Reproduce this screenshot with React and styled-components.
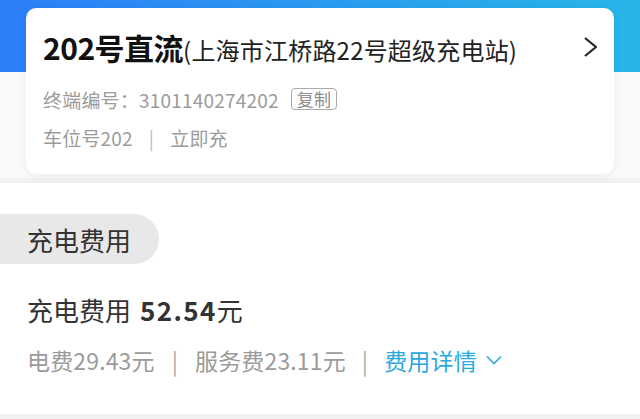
import styled, { createGlobalStyle } from "styled-components";

const GlobalStyle = createGlobalStyle`
  html, body {
    margin: 0;
    padding: 0;
    background: #ffffff;
  }
  body {
    font-family: "Noto Sans CJK SC", "Noto Sans", sans-serif;
  }
`;

const Page = styled.div`
  width: 640px;
  height: 419px;
  overflow: hidden;
  display: flex;
  flex-direction: column;
`;

const TopArea = styled.div`
  padding: 8px 26px 4px;
  background: linear-gradient(90deg, #2c7ef8 0%, #27b6e8 100%) top / 100% 72px
      no-repeat,
    #fafafa;
  border-bottom: 5px solid #f1f1f1;
`;

const Card = styled.div`
  background: #ffffff;
  border-radius: 10px;
  box-shadow: 0 2px 8px rgba(0, 0, 0, 0.06);
  padding: 24px 17px 24px;
  display: flex;
  flex-direction: column;
`;

const TitleRow = styled.div`
  display: flex;
  align-items: center;
  justify-content: space-between;
  height: 30px;
  margin-bottom: 24px;
`;

const Title = styled.div`
  display: flex;
  align-items: baseline;
  white-space: nowrap;
`;

const TitleMain = styled.span`
  font-size: 30px;
  font-weight: 700;
  color: #111111;
  letter-spacing: -0.5px;
`;

const TitleSub = styled.span`
  font-size: 24px;
  color: #222222;
  letter-spacing: 0.2px;
`;

const InfoRows = styled.div`
  display: flex;
  flex-direction: column;
  gap: 12px;
`;

const InfoRow = styled.div`
  display: flex;
  align-items: center;
  height: 26px;
  font-size: 19px;
  color: #9b9b9b;
  letter-spacing: 0.2px;
  white-space: nowrap;
`;

const CopyTag = styled.span`
  margin-left: 12px;
  padding: 0 5px;
  height: 20px;
  line-height: 20px;
  font-size: 17px;
  color: #8c8c8c;
  border: 1px solid #a9a9a9;
  border-radius: 4px;
`;

const Sep = styled.span`
  color: ${(p) => p.$color || "#bbbbbb"};
  margin: 0 ${(p) => p.$space || 16}px;
`;

const FeeSection = styled.div`
  flex: 1;
  background: #ffffff;
  padding: 31px 0 0;
  border-bottom: 5px solid #f1f1f1;
`;

const Pill = styled.div`
  display: inline-flex;
  align-items: center;
  height: 50px;
  padding: 0 28px 0 27px;
  background: #e8e8e8;
  border-radius: 0 25px 25px 0;
  font-size: 26px;
  color: #333333;
`;

const Total = styled.div`
  margin-top: 28px;
  padding-left: 27px;
  height: 34px;
  display: flex;
  align-items: center;
  font-size: 26px;
  color: #333333;
  white-space: nowrap;
`;

const Amount = styled.span`
  font-weight: 700;
  margin-left: 9px;
  letter-spacing: 1.4px;
`;

const FeeRow = styled.div`
  margin-top: 19px;
  padding-left: 27px;
  height: 30px;
  display: flex;
  align-items: center;
  font-size: 23px;
  color: #9b9b9b;
  letter-spacing: 0.15px;
  white-space: nowrap;
`;

const DetailLink = styled.span`
  display: inline-flex;
  align-items: center;
  gap: 9px;
  color: #2aa9df;
`;

function ChevronRight() {
  return (
    <svg width="16" height="22" viewBox="0 0 16 22">
      <path d="M4 2 L15 11 L4 20" fill="none" stroke="#222" strokeWidth="2.2" />
    </svg>
  );
}

function ChevronDown() {
  return (
    <svg width="16" height="10" viewBox="0 0 16 10">
      <path d="M1 1.5 L8 8.5 L15 1.5" fill="none" stroke="#2aa9df" strokeWidth="1.6" />
    </svg>
  );
}

export default function App() {
  return (
    <>
      <GlobalStyle />
      <Page>
        <TopArea>
          <Card>
            <TitleRow>
              <Title>
                <TitleMain>202号直流</TitleMain>
                <TitleSub>(上海市江桥路22号超级充电站)</TitleSub>
              </Title>
              <ChevronRight />
            </TitleRow>
            <InfoRows>
              <InfoRow>
                终端编号：3101140274202
                <CopyTag>复制</CopyTag>
              </InfoRow>
              <InfoRow>
                车位号202
                <Sep>|</Sep>
                立即充
              </InfoRow>
            </InfoRows>
          </Card>
        </TopArea>
        <FeeSection>
          <Pill>充电费用</Pill>
          <Total>
            充电费用
            <Amount>52.54</Amount>元
          </Total>
          <FeeRow>
            电费29.43元
            <Sep $color="#aaaaaa" $space={17}>|</Sep>
            服务费23.11元
            <Sep $color="#aaaaaa" $space={16}>|</Sep>
            <DetailLink>
              费用详情
              <ChevronDown />
            </DetailLink>
          </FeeRow>
        </FeeSection>
      </Page>
    </>
  );
}
